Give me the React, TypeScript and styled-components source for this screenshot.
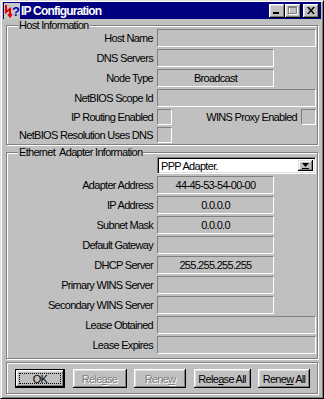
import React from 'react';
import styled, { createGlobalStyle, css } from 'styled-components';

const Global = createGlobalStyle`
  html, body { margin: 0; padding: 0; background: #c0c0c0; }
  body { font-family: "Liberation Sans", Arial, sans-serif; }
  * { box-sizing: border-box; }
`;

const Window = styled.div`
  width: 324px;
  height: 399px;
  background: #c0c0c0;
  border: 1px solid;
  border-color: #dfdfdf #000 #000 #dfdfdf;
  box-shadow: inset 1px 1px #fff, inset -1px -1px #808080;
  padding: 1px 2px 2px 2px;
  display: flex;
  flex-direction: column;
  font-size: 11px;
  letter-spacing: -0.7px;
  color: #000;
`;

const TitleBar = styled.div`
  height: 17px;
  background: #000080;
  display: flex;
  align-items: center;
  padding: 0 2px 0 1px;
  flex-shrink: 0;
`;

const TitleText = styled.span`
  color: #fff;
  font-weight: bold;
  font-size: 12px;
  letter-spacing: -0.8px;
  margin-left: 1px;
  white-space: nowrap;
`;

const TitleButtons = styled.div`
  margin-left: auto;
  display: flex;
  align-items: center;
`;

const TitleButton = styled.div<{ $gap?: boolean }>`
  width: 16px;
  height: 14px;
  background: #c0c0c0;
  box-shadow: inset -1px -1px #000, inset 1px 1px #fff, inset -2px -2px #808080, inset 2px 2px #dfdfdf;
  display: flex;
  align-items: center;
  justify-content: center;
  margin-left: ${p => (p.$gap ? '2px' : '0')};
`;

const Group = styled.fieldset<{ $pb: number; $mt: number }>`
  margin: ${p => p.$mt}px 3px 0 3px;
  padding: 0 1px ${p => p.$pb}px 6px;
  border: 1px solid #808080;
  box-shadow: inset 1px 1px #fff, 1px 1px #fff;
  min-width: 0;
`;

const Legend = styled.legend`
  margin-left: 5px;
  padding: 0 1px;
  line-height: 8px;
  background: #c0c0c0;
  white-space: pre;
`;

const Rows = styled.div<{ $pt?: number }>`
  display: flex;
  flex-direction: column;
  gap: 2px;
  padding-top: ${p => p.$pt ?? 0}px;
`;

const Row = styled.div<{ $h: number }>`
  display: flex;
  align-items: center;
  gap: 4px;
  height: ${p => p.$h}px;
`;

const Label = styled.span<{ $w?: number }>`
  width: ${p => (p.$w ? `${p.$w}px` : 'auto')};
  flex: ${p => (p.$w ? '0 0 auto' : '1 1 auto')};
  text-align: right;
  white-space: nowrap;
`;

const Field = styled.div<{ $w?: number }>`
  height: 100%;
  ${p => (p.$w ? css`width: ${p.$w}px; flex: 0 0 auto;` : css`flex: 1 1 auto;`)}
  border: 1px solid;
  border-color: #808080 #fff #fff #808080;
  display: flex;
  align-items: center;
  justify-content: center;
  white-space: nowrap;
`;

const Select = styled.div`
  flex: 1 1 auto;
  height: 100%;
  background: #fff;
  border: 1px solid;
  border-color: #808080 #fff #fff #808080;
  box-shadow: inset 1px 1px #000, inset -1px -1px #dfdfdf;
  padding: 2px;
  display: flex;
  align-items: center;
`;

const SelectText = styled.span`
  flex: 1;
  padding-left: 1px;
`;

const ArrowButton = styled.div`
  width: 15px;
  height: 100%;
  background: #c0c0c0;
  box-shadow: inset -1px -1px #000, inset 1px 1px #dfdfdf, inset -2px -2px #808080, inset 2px 2px #fff;
  display: flex;
  align-items: center;
  justify-content: center;
`;

const ButtonPanel = styled.div`
  margin: 3px 3px 0 3px;
  border: 1px solid #808080;
  box-shadow: inset 1px 1px #fff, 1px 1px #fff;
  padding: 6px 7px 5px 8px;
  display: flex;
  justify-content: space-between;
`;

const PushButton = styled.button<{ $w: number; $default?: boolean }>`
  position: relative;
  width: ${p => p.$w}px;
  height: 19px;
  padding: 0;
  margin: 0;
  font-family: "Liberation Sans", Arial, sans-serif;
  font-size: 11px;
  letter-spacing: -0.7px;
  color: #000;
  background: #c0c0c0;
  border: none;
  box-shadow: inset -1px -1px #000, inset 1px 1px #fff, inset -2px -2px #808080, inset 2px 2px #dfdfdf;
  ${p =>
    p.$default &&
    css`
      border: 1px solid #000;
      &::after {
        content: '';
        position: absolute;
        inset: 3px;
        border: 1px dotted #000;
      }
    `}
  &:disabled {
    color: #808080;
    text-shadow: 1px 1px #fff;
  }
`;

const AppIcon = () => (
  <svg width="16" height="16" viewBox="0 0 16 16">
    <rect x="0" y="0" width="16" height="16" fill="#c8c8c8" />
    <polyline points="2,2 2,9 6,6 6,13" fill="none" stroke="#e00000" strokeWidth="2" />
    <polyline points="4,11 6,14 8,11" fill="none" stroke="#e00000" strokeWidth="1.5" />
    <text x="11.5" y="13" textAnchor="middle" fontFamily="Liberation Sans, Arial, sans-serif" fontWeight="bold" fontSize="13" fill="#0000c0">?</text>
  </svg>
);

const MinGlyph = () => (
  <svg width="8" height="8" viewBox="0 0 8 8">
    <rect x="0" y="5" width="6" height="2" fill="#000" />
  </svg>
);

const MaxGlyph = () => (
  <svg width="10" height="9" viewBox="0 0 10 9">
    <rect x="1.5" y="1.5" width="8" height="7" fill="none" stroke="#fff" strokeWidth="1" />
    <rect x="1" y="1" width="9" height="1" fill="#fff" />
    <rect x="0.5" y="0.5" width="8" height="7" fill="none" stroke="#808080" strokeWidth="1" />
    <rect x="0" y="0" width="9" height="2" fill="#808080" />
  </svg>
);

const CloseGlyph = () => (
  <svg width="8" height="7" viewBox="0 0 8 7">
    <path d="M0 0h2l2 2.5L6 0h2L5 3.5 8 7H6L4 4.5 2 7H0l3-3.5z" fill="#000" />
  </svg>
);

const DownArrow = () => (
  <svg width="7" height="6" viewBox="0 0 7 6">
    <path d="M0 0h7L3.5 4z" fill="#000" />
    <rect x="0" y="5" width="7" height="1" fill="#000" />
  </svg>
);

type RowDef = { label: string; value?: string; w?: number };

const hostRows: RowDef[] = [
  { label: 'Host Name' },
  { label: 'DNS Servers', w: 117 },
  { label: 'Node Type', value: 'Broadcast', w: 117 },
  { label: 'NetBIOS Scope Id' },
];

const adapterRows: RowDef[] = [
  { label: 'Adapter Address', value: '44-45-53-54-00-00', w: 117 },
  { label: 'IP Address', value: '0.0.0.0', w: 117 },
  { label: 'Subnet Mask', value: '0.0.0.0', w: 117 },
  { label: 'Default Gateway', w: 117 },
  { label: 'DHCP Server', value: '255.255.255.255', w: 117 },
  { label: 'Primary WINS Server', w: 117 },
  { label: 'Secondary WINS Server', w: 117 },
  { label: 'Lease Obtained' },
  { label: 'Lease Expires' },
];

const LABEL_W = 140;

export default function App() {
  return (
    <>
      <Global />
      <Window>
        <TitleBar>
          <AppIcon />
          <TitleText>IP Configuration</TitleText>
          <TitleButtons>
            <TitleButton><MinGlyph /></TitleButton>
            <TitleButton><MaxGlyph /></TitleButton>
            <TitleButton $gap><CloseGlyph /></TitleButton>
          </TitleButtons>
        </TitleBar>

        <Group $pb={1} $mt={2}>
          <Legend>Host Information</Legend>
          <Rows>
            {hostRows.map(r => (
              <Row $h={18} key={r.label}>
                <Label $w={LABEL_W}>{r.label}</Label>
                <Field $w={r.w}>{r.value}</Field>
              </Row>
            ))}
            <Row $h={16}>
              <Label $w={LABEL_W}>IP Routing Enabled</Label>
              <Field $w={15} />
              <Label>WINS Proxy Enabled</Label>
              <Field $w={15} />
            </Row>
            <Row $h={16}>
              <Label $w={LABEL_W}>NetBIOS Resolution Uses DNS</Label>
              <Field $w={15} />
            </Row>
          </Rows>
        </Group>

        <Group $pb={4} $mt={3}>
          <Legend>{'Ethernet  Adapter Information'}</Legend>
          <Rows $pt={1}>
            <Row $h={17}>
              <Label $w={LABEL_W} />
              <Select>
                <SelectText>PPP Adapter.</SelectText>
                <ArrowButton><DownArrow /></ArrowButton>
              </Select>
            </Row>
            {adapterRows.map(r => (
              <Row $h={18} key={r.label}>
                <Label $w={LABEL_W}>{r.label}</Label>
                <Field $w={r.w}>{r.value}</Field>
              </Row>
            ))}
          </Rows>
        </Group>

        <ButtonPanel>
          <PushButton $w={50} $default>OK</PushButton>
          <PushButton $w={54} disabled>Rele<u>a</u>se</PushButton>
          <PushButton $w={52} disabled>Rene<u>w</u></PushButton>
          <PushButton $w={57}>Rele<u>a</u>se All</PushButton>
          <PushButton $w={52}>Rene<u>w</u> All</PushButton>
        </ButtonPanel>
      </Window>
    </>
  );
}
